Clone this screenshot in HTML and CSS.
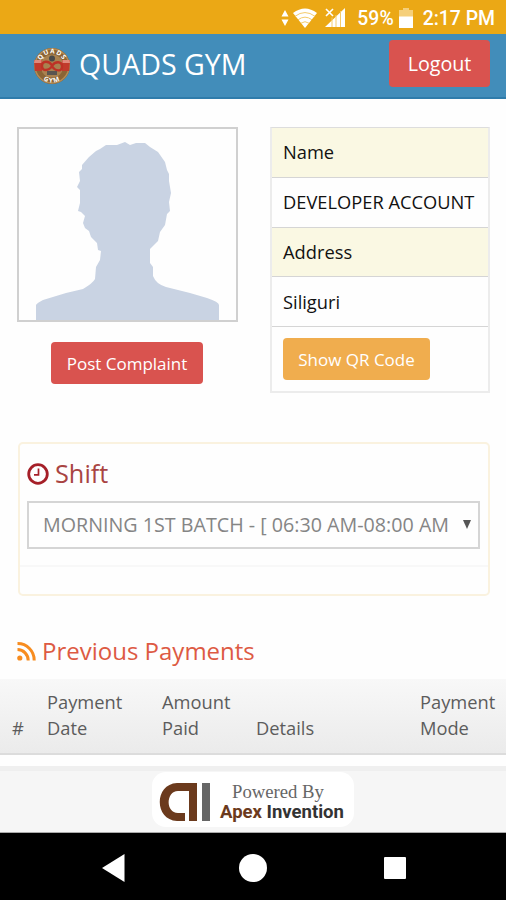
FILE: index.html
```html
<!DOCTYPE html>
<html lang="en">
<head>
  <meta charset="UTF-8">
  <meta name="viewport" content="width=device-width, initial-scale=1">
  <title>Quads Gym</title>
  <link rel="stylesheet" href="styles.css">
</head>
<body>

  <div class="statusbar">
    <svg class="icon-updown" width="8" height="18" viewBox="0 0 8 18">
      <path d="M4 1L7.500 7.500H.5zM4 17L.5 10.500h7z" fill="#fff"/>
    </svg>
    <svg class="icon-wifi" width="24" height="20" viewBox="0 0 24 20">
      <path d="M0 5Q12-4 24 5L12 20z" fill="#fff"/>
      <path d="M2 8.300Q12 .8 22 8.300M5 11.800Q12 6.500 19 11.800M8 15.200Q12 12.200 16 15.200" fill="none" stroke="#f4cb6c" stroke-width="1"/>
    </svg>
    <svg class="icon-signal" width="20" height="20" viewBox="0 0 20 20">
      <path d="M0 19L20 0v19z" fill="#fff"/>
      <path d="M7 9v10M11 7v12M15.500 3v16" stroke="#f4cb6c" stroke-width="1"/>
      <path d="M0 0h9.500v9.500H0z" fill="#eba815"/>
      <path d="M1 1l7 7M8 1L1 8" stroke="#fff" stroke-width="1.600"/>
    </svg>
    <span class="percent">59%</span>
    <svg class="icon-battery" width="14" height="20" viewBox="0 0 14 20">
      <path d="M4 0h6v2h4v7H0V2h4z" fill="#f5cf7a"/>
      <path d="M0 8.500h14V20H0z" fill="#fff"/>
    </svg>
    <span class="time">2:17 PM</span>
  </div>

  <div class="header">
    <svg class="emblem" width="38" height="38" viewBox="0 0 38 38">
      <defs>
        <path id="arc-top" d="M6.500 19a12.500 12.500 0 0 1 25 0"/>
        <path id="arc-bottom" d="M2.500 19a16.500 16.500 0 0 0 33 0"/>
      </defs>
      <circle cx="19" cy="19" r="18" fill="#8b6435"/>
      <circle cx="19" cy="19" r="17" fill="none" stroke="#b38b55" stroke-width="1.500"/>
      <circle cx="19" cy="19" r="11.500" fill="#a98250"/>
      <path d="M1 13h8v11H2zM37 13h-8v11h7z" fill="#c23a2c"/>
      <path d="M1.500 13h7v3H1zM36.500 13h-7v3H37z" fill="#e08a7c"/>
      <circle cx="19" cy="11.500" r="3" fill="#4a4a4a"/>
      <path d="M19 18.500c-3-5-10-5-10 .5s7 5 10 0 10-5 10 .5-7 5-10-.5z" fill="none" stroke="#bd3226" stroke-width="2.400"/>
      <path d="M14 24h10v4H14z" fill="#5a5550"/>
      <text class="emblem-text"><textPath href="#arc-top" startOffset="50%">QUADS</textPath></text>
      <text class="emblem-text"><textPath href="#arc-bottom" startOffset="50%">GYM</textPath></text>
    </svg>
    <h1>QUADS GYM</h1>
    <a class="btn btn-danger btn-logout">Logout</a>
  </div>

  <div class="content">
    <div class="profile">
      <div class="profile-left">
        <div class="photo">
          <svg width="217" height="191" viewBox="19 129 217 191">
            <path d="M36 320V305Q37 303 43 300L66 293 83 289Q93 283 95 279L96 267 100 260 101 251 98 250 97 243 91 237 89 231 85 228 83 223 85 216 81 212 78 211 80 203V190L77 187 80 181 79 172 82 169V165L89 157 96 151 100 149 106 145 117 145 125 142 130 145 136 143H145L150 147 158 152 165 162 167 170 169 174 169 181 171 193 169 202 170 211 167 214 165 225 160 232 158 241 150 249V263L153 267V276Q156 284 166 287L190 293 207 298Q219 302 219 305V320z" fill="#c9d3e3"/>
          </svg>
        </div>
        <a class="btn btn-danger btn-post">Post Complaint</a>
      </div>
      <div class="info">
        <div class="info-row shaded">Name</div>
        <div class="info-row">DEVELOPER ACCOUNT</div>
        <div class="info-row shaded">Address</div>
        <div class="info-row">Siliguri</div>
        <div class="info-action"><a class="btn btn-warning">Show QR Code</a></div>
      </div>
    </div>

    <div class="panel">
      <h2 class="shift-title">
        <svg width="22" height="22" viewBox="0 0 22 22">
          <circle cx="11" cy="11" r="9.300" fill="none" stroke="#a51f28" stroke-width="2.800"/>
          <path d="M11.500 5.500v6.300H7" fill="none" stroke="#a51f28" stroke-width="1.700"/>
        </svg>
        <span>Shift</span>
      </h2>
      <div class="select">
        <span>MORNING 1ST BATCH - [ 06:30 AM-08:00 AM</span>
        <svg width="8" height="9" viewBox="0 0 8 9"><path d="M0 0h8L4 9z" fill="#555"/></svg>
      </div>
      <div class="panel-footer"></div>
    </div>

    <h2 class="payments-title">
      <svg width="19" height="19" viewBox="0 0 19 19">
        <circle cx="2.800" cy="16" r="2.600" fill="#f78c1f"/>
        <path d="M.5 7.600A10.800 10.800 0 0 1 11.200 18.500M.5 1.600A16.500 16.500 0 0 1 17.200 18.500" fill="none" stroke="#f78c1f" stroke-width="3"/>
      </svg>
      <span>Previous Payments</span>
    </h2>
  </div>

  <div class="payments-head">
    <div>#</div>
    <div>Payment<br>Date</div>
    <div>Amount<br>Paid</div>
    <div>Details</div>
    <div>Payment<br>Mode</div>
  </div>

  <div class="footer">
    <div class="powered">
      <svg width="52" height="40" viewBox="0 0 52 40">
        <path d="M38 1v38h-8V9H19C7 9 6 31 19 31h7v8h-8C-5 38-5 2 18 1z" fill="#6b3a1d"/>
        <path d="M43 1h8v38h-8z" fill="#666"/>
      </svg>
      <div class="powered-text">
        <div class="by">Powered By</div>
        <div class="company"><span>Apex</span> Invention</div>
      </div>
    </div>
  </div>

  <div class="navbar">
    <svg width="23" height="28" viewBox="0 0 23 28"><path d="M0 14L22.500 0v28z" fill="#fff"/></svg>
    <svg width="28" height="28" viewBox="0 0 28 28"><circle cx="14" cy="14" r="14" fill="#fff"/></svg>
    <svg width="22" height="22" viewBox="0 0 22 22"><rect width="22" height="22" rx="1" fill="#fff"/></svg>
  </div>

</body>
</html>
```
FILE: styles.css
```css
* {
  box-sizing: border-box;
}

body {
  margin: 0;
  width: 506px;
  height: 900px;
  overflow: hidden;
  background: #fefefe;
  font-family: "Open Sans", sans-serif;
  color: #222;
}

svg {
  display: block;
  flex: none;
}

h1, h2 {
  margin: 0;
  font-weight: 400;
}

.statusbar {
  height: 34px;
  padding: 2px 11px 0 0;
  background: #eba815;
  display: flex;
  align-items: center;
  justify-content: flex-end;
  font-family: Roboto, sans-serif;
  font-size: 19.4px;
  font-weight: 500;
  color: #fff;
}

.icon-wifi {
  margin-left: 4px;
}

.icon-signal {
  margin-left: 8px;
}

.percent {
  margin-left: 12px;
}

.icon-battery {
  margin: 0 10px 0 5px;
}

.header {
  height: 65px;
  padding: 0 16px 5px 33px;
  background: #428dba;
  border-bottom: 2px solid #2f7cab;
  display: flex;
  align-items: center;
}

.header h1 {
  margin: 1px 0 0 8px;
  font-size: 28.6px;
  line-height: 40px;
  color: #fff;
  white-space: nowrap;
}

.emblem {
  margin-top: 5px;
  overflow: visible;
}

.emblem-text {
  font-size: 6.5px;
  font-weight: 700;
  letter-spacing: 1px;
  fill: #fff;
  text-anchor: middle;
}

.btn {
  display: flex;
  align-items: center;
  justify-content: center;
  height: 42px;
  border-radius: 4px;
  font-size: 17px;
  color: #fff;
  white-space: nowrap;
}

.btn-danger {
  background: #d9534f;
}

.btn-warning {
  width: 147px;
  background: #f0ad4e;
}

.btn-logout {
  width: 101px;
  height: 47px;
  margin-left: auto;
  font-size: 19.7px;
}

.btn-post {
  width: 152px;
  margin: 20px auto 0 34px;
}

.content {
  height: 580px;
  padding: 28px 16px 0 17px;
}

.profile {
  display: flex;
  justify-content: space-between;
  height: 315px;
}

.profile-left {
  width: 221px;
}

.photo {
  height: 195px;
  border: 2px solid #d0d0d0;
}

.info {
  width: 220px;
  height: 266px;
  border: 2px solid #ececec;
  border-top: 1px solid #ddd;
  font-size: 18.3px;
  color: #111;
}

.info-row {
  height: 49.8px;
  padding: 0 0 1px 11px;
  display: flex;
  align-items: center;
  border-bottom: 1px solid #d5d5d5;
  white-space: nowrap;
}

.info-row.shaded {
  background: #faf8e3;
}

.info-action {
  padding: 11px;
}

.panel {
  height: 154px;
  margin-left: 1px;
  border: 2px solid #faf2df;
  border-radius: 5px;
}

.shift-title {
  display: flex;
  align-items: center;
  gap: 6px;
  height: 57px;
  padding: 2px 0 0 7px;
  font-size: 25.3px;
  color: #a94442;
}

.shift-title span,
.payments-title span {
  margin-top: -2px;
}

.select {
  height: 48px;
  margin: 0 8px 0 7px;
  padding: 0 7px 2px 14px;
  border: 2px solid #d5d5d5;
  display: flex;
  align-items: center;
  justify-content: space-between;
  font-size: 19.7px;
  color: #858585;
  white-space: nowrap;
}

.panel-footer {
  margin-top: 16px;
  border-top: 2px solid #f8f8f8;
}

.payments-title {
  display: flex;
  align-items: center;
  gap: 6px;
  margin-top: 38px;
  height: 34px;
  font-size: 24px;
  color: #dd5a43;
}

.payments-head {
  height: 76px;
  padding: 0 0 12px 12px;
  display: grid;
  grid-template-columns: 35px 115px 94px 164px 86px;
  align-items: end;
  background: linear-gradient(#f8f8f8, #ebebeb);
  border-bottom: 2px solid #dcdcdc;
  font-size: 18.3px;
  font-weight: 500;
  line-height: 26px;
  color: #5c5c5c;
}

.footer {
  height: 67px;
  margin-top: 11px;
  padding-top: 1px;
  background: #f6f6f6;
  border-top: 5px solid #efefef;
  border-bottom: 1px solid #aaa;
}

.powered {
  width: 202px;
  height: 55px;
  margin-left: 152px;
  padding: 4px 0 0 7px;
  display: flex;
  align-items: center;
  background: #fff;
  border-radius: 14px;
}

.powered-text {
  margin-left: 9px;
  padding-top: 2px;
  white-space: nowrap;
}

.by {
  padding-left: 12px;
  font-family: "Liberation Serif", serif;
  font-size: 18.7px;
  line-height: 18px;
  color: #666;
}

.company {
  font-family: "Roboto", sans-serif;
  font-size: 18.5px;
  font-weight: 700;
  line-height: 22px;
  color: #333;
}

.company span {
  color: #6b3a1d;
}

.navbar {
  height: 67px;
  padding: 3px 100px 0 102px;
  display: flex;
  align-items: center;
  justify-content: space-between;
  background: #000;
}

.navbar svg:nth-child(2) {
  margin-right: 3px;
}
```
